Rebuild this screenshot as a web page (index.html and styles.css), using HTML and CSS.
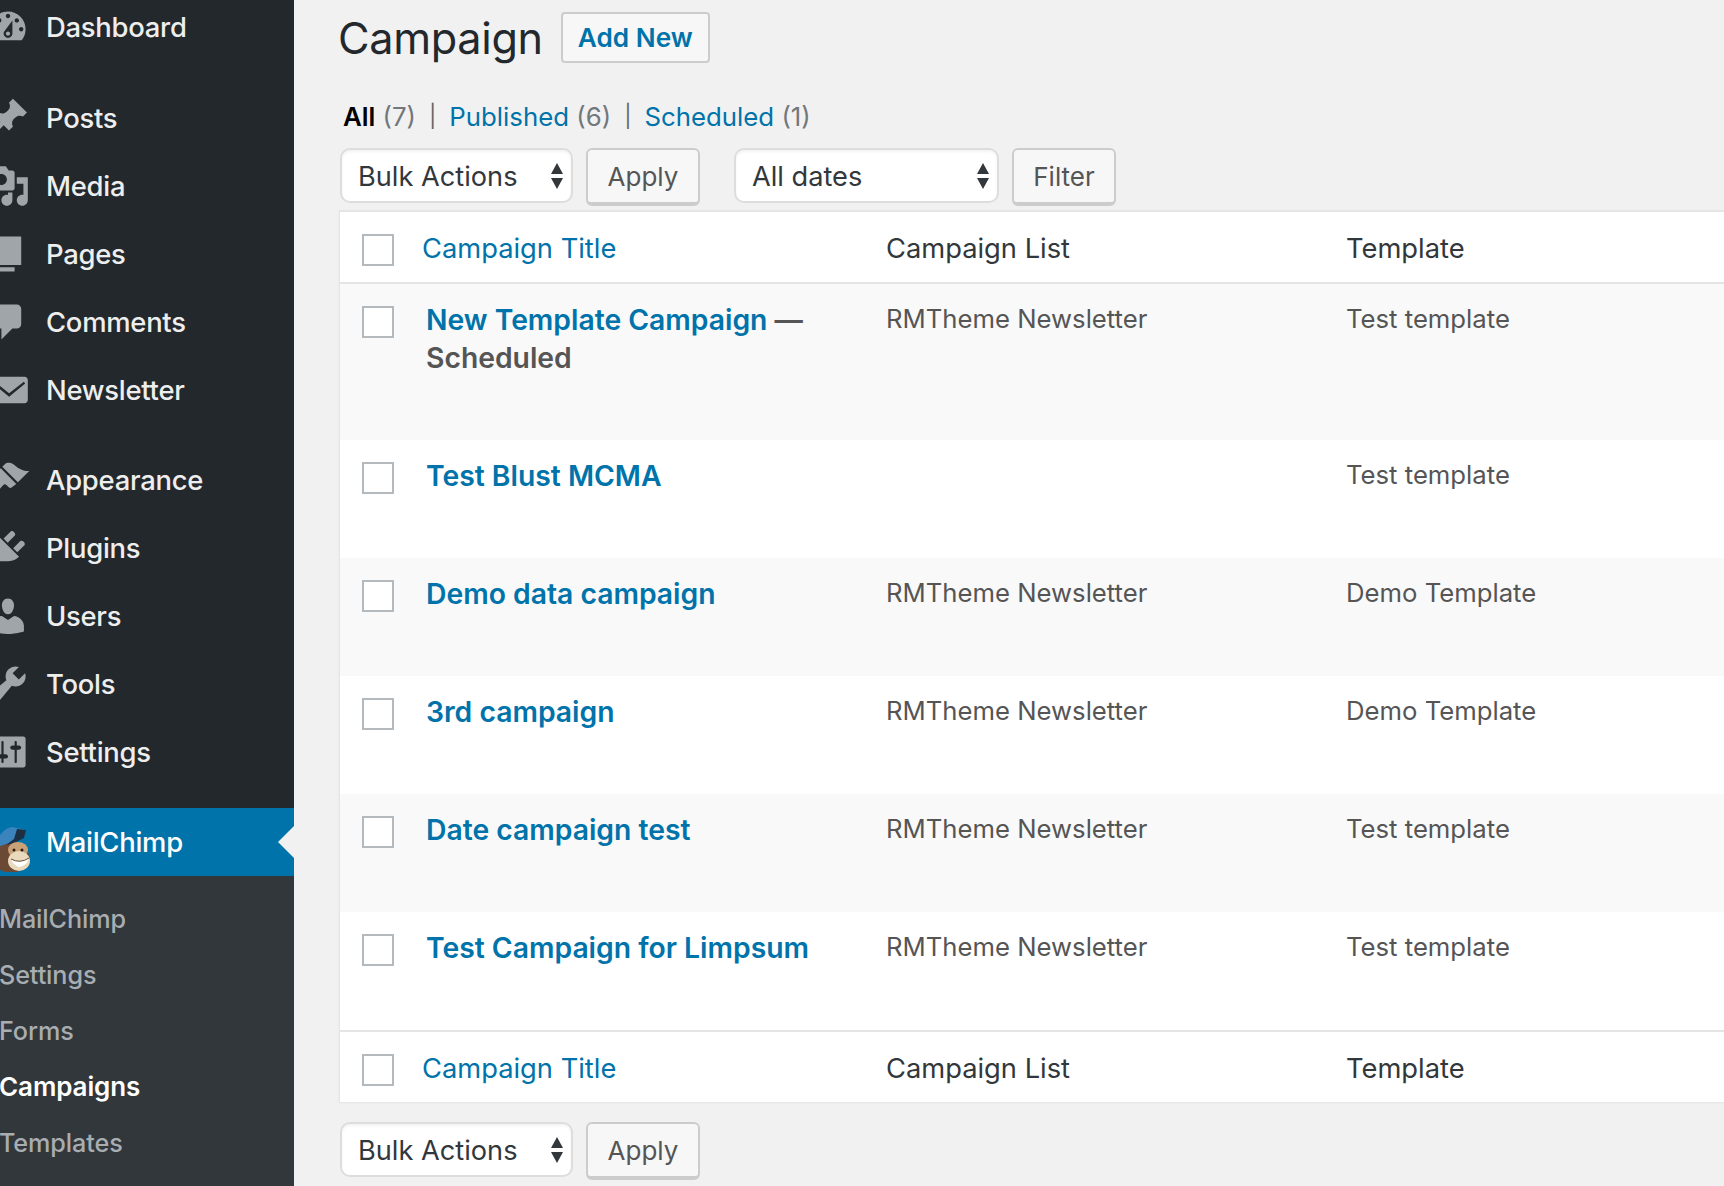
FILE: index.html
```html
<!DOCTYPE html>
<html lang="en">
<head>
<meta charset="utf-8">
<title>Campaign</title>
<link rel="stylesheet" href="styles.css">
</head>
<body>
<div class="page">
  <nav class="sidebar">
    <ul class="menu">
      <li class="item"><svg class="icon" viewBox="0 0 20 20"><path fill-rule="evenodd" d="M3.76 16h12.48c1.1-1.37 1.76-3.11 1.76-5 0-4.42-3.58-8-8-8s-8 3.58-8 8c0 1.89.66 3.63 1.76 5zM10 4c.55 0 1 .45 1 1s-.45 1-1 1-1-.45-1-1 .45-1 1-1zM6 6c.55 0 1 .45 1 1s-.45 1-1 1-1-.45-1-1 .45-1 1-1zm8 0c.55 0 1 .45 1 1s-.45 1-1 1-1-.45-1-1 .45-1 1-1zm-5.37 5.55L12 7v6c0 1.1-.9 2-2 2s-2-.9-2-2c0-.57.24-1.08.63-1.45zM4 10c.55 0 1 .45 1 1s-.45 1-1 1-1-.45-1-1 .45-1 1-1zm12 0c.55 0 1 .45 1 1s-.45 1-1 1-1-.45-1-1 .45-1 1-1zm-5 3c0-.55-.45-1-1-1s-1 .45-1 1 .45 1 1 1 1-.45 1-1z"/></svg><span>Dashboard</span></li>
    </ul>
    <ul class="menu">
      <li class="item"><svg class="icon" viewBox="0 0 20 20"><path d="M10.44 3.02l1.82-1.82 6.36 6.35-1.83 1.82c-1.05-.68-2.48-.57-3.41.36l-.75.75c-.92.93-1.04 2.35-.35 3.41l-1.83 1.82-2.41-2.41-2.8 2.79c-.42.42-3.38 2.71-3.8 2.29s1.86-3.39 2.28-3.81l2.79-2.79L4.1 9.36l1.83-1.82c1.05.69 2.48.57 3.4-.36l.75-.75c.93-.92 1.05-2.35.36-3.41z"/></svg><span>Posts</span></li>
      <li class="item"><svg class="icon" viewBox="0 0 20 20"><path fill-rule="evenodd" d="M13 11V4c0-.55-.45-1-1-1h-1.67L9 1H5L3.67 3H2c-.55 0-1 .45-1 1v7c0 .55.45 1 1 1h10c.55 0 1-.45 1-1zM7 4.500c1.380 0 2.500 1.120 2.500 2.500S8.380 9.500 7 9.500 4.500 8.380 4.500 7 5.620 4.500 7 4.500zM14 6h5v10.500c0 1.380-1.120 2.500-2.500 2.500S14 17.880 14 16.500s1.120-2.500 2.500-2.500c.17 0 .34.02.5.05V9h-3V6zm-4 8.050V13h2v3.500c0 1.380-1.120 2.500-2.500 2.500S7 17.880 7 16.500 8.120 14 9.500 14c.17 0 .34.02.5.05z"/></svg><span>Media</span></li>
      <li class="item"><svg class="icon" viewBox="0 0 20 20"><path d="M6 15V2h10v13H6zm-1 1h8v2H3V5h2v11z"/></svg><span>Pages</span></li>
      <li class="item"><svg class="icon" viewBox="0 0 20 20"><path d="M5 2h9c1.100 0 2 .9 2 2v7c0 1.100-.9 2-2 2h-2l-5 5v-5H5c-1.100 0-2-.9-2-2V4c0-1.100.9-2 2-2z"/></svg><span>Comments</span></li>
      <li class="item"><svg class="icon" viewBox="0 0 20 20"><path fill-rule="evenodd" d="M19 14.500v-9c0-.83-.67-1.500-1.500-1.500H3.490c-.83 0-1.500.67-1.500 1.500v9c0 .83.67 1.500 1.500 1.500H17.500c.83 0 1.500-.67 1.500-1.500zM3.800 6.200l6.700 5.300 6.700-5.300.6.9-7.300 6-7.300-6z"/></svg><span>Newsletter</span></li>
    </ul>
    <ul class="menu">
      <li class="item"><svg class="icon" viewBox="0 0 20 20"><path d="M14.480 11.060L7.410 3.990l1.500-1.500c.5-.56 2.300-.47 3.510.32 1.210.8 1.430 1.280 2.910 2.100 1.180.64 2.450 1.260 4.450.85zm-.71.71L6.700 4.700 4.930 6.470c-.39.39-.39 1.020 0 1.410l1.060 1.060c.39.39.39 1.030 0 1.420-.6.6-1.400 1.220-2.170 1.960-.33.29-.65.57-.94.86-.21.21-.32.490-.32.77 0 .29.11.57.32.78l.63.63c.2.21.48.32.77.32.28 0 .56-.11.77-.32.28-.29.57-.61.86-.94.74-.77 1.360-1.570 1.960-2.170.39-.39 1.030-.39 1.420 0l1.060 1.060c.39.39 1.020.39 1.410 0z"/></svg><span>Appearance</span></li>
      <li class="item"><svg class="icon" viewBox="0 0 20 20"><path d="M13.110 4.360L9.870 7.600 8 5.730l3.240-3.240c.35-.34 1.050-.2 1.560.32.52.51.66 1.210.31 1.550zm-8 1.770l.91-1.120 9.010 9.010-1.190.84c-.71.71-2.630 1.160-3.820 1.160H6.140L4.900 17.260c-.59.59-1.540.59-2.120 0-.59-.58-.59-1.530 0-2.120l1.240-1.240v-3.880c0-1.130.4-3.190 1.090-3.890zm7.260 3.970l3.240-3.240c.34-.35 1.040-.21 1.550.31.52.51.66 1.210.31 1.550l-3.240 3.250z"/></svg><span>Plugins</span></li>
      <li class="item"><svg class="icon" viewBox="0 0 20 20"><path d="M10 9.250c-2.270 0-2.730-3.440-2.730-3.440C7 4.020 7.820 2 9.970 2c2.160 0 2.980 2.020 2.710 3.810 0 0-.41 3.440-2.680 3.440zm0 2.570L12.720 10c2.390 0 4.520 2.330 4.520 4.530v2.490s-3.650 1.130-7.240 1.130c-3.650 0-7.240-1.130-7.240-1.130v-2.490c0-2.250 1.940-4.480 4.470-4.480z"/></svg><span>Users</span></li>
      <li class="item"><svg class="icon" viewBox="0 0 20 20"><path fill-rule="evenodd" d="M16.680 9.770c-1.340 1.340-3.300 1.670-4.950.99l-5.410 6.520c-.99.99-2.590.99-3.580 0s-.99-2.590 0-3.570l6.520-5.420c-.68-1.650-.35-3.610.99-4.950 1.280-1.280 3.120-1.620 4.720-1.060l-2.890 2.890 2.820 2.820 2.860-2.870c.53 1.580.18 3.390-1.080 4.650zM3.810 16.210c.4.39 1.040.39 1.430 0 .4-.4.4-1.040 0-1.430-.39-.4-1.030-.4-1.430 0-.39.39-.39 1.030 0 1.430z"/></svg><span>Tools</span></li>
      <li class="item"><svg class="icon" viewBox="0 0 20 20"><path fill-rule="evenodd" d="M18 16V4c0-.55-.45-1-1-1H3c-.55 0-1 .45-1 1v12c0 .55.45 1 1 1h14c.55 0 1-.45 1-1zM8 11h1c.55 0 1 .45 1 1s-.45 1-1 1H8v1.500c0 .28-.22.5-.5.5s-.5-.22-.5-.5V13H6c-.55 0-1-.45-1-1s.45-1 1-1h1V5.500c0-.28.22-.5.5-.5s.5.22.5.5V11zm5-2h-1c-.55 0-1-.45-1-1s.45-1 1-1h1V5.500c0-.28.22-.5.5-.5s.5.22.5.5V7h1c.55 0 1 .45 1 1s-.45 1-1 1h-1v5.500c0 .28-.22.5-.5.5s-.5-.22-.5-.5V9z"/></svg><span>Settings</span></li>
    </ul>
    <div class="item item-active">
      <svg class="chimp" viewBox="0 0 44 60">
        <ellipse cx="25" cy="45" rx="18" ry="16" fill="#6b4a35"/>
        <path fill="#3b83bd" d="M14 23 C18 18 22 15 27 15 L39 18 L38 25 L27 30 L14 34 Z"/>
        <path fill="#1d2f42" d="M31 17 L40 18 L38 26 L28 31 L20 33 L28 27 Z"/>
        <ellipse cx="32" cy="38" rx="10" ry="8" fill="#c9a177"/>
        <ellipse cx="33" cy="49" rx="11" ry="10" fill="#e9d9bd"/>
        <path fill="#fff" d="M25 47 Q34 52 43 46 Q41 54 33 55 Q27 53 25 47 Z"/>
        <path fill="none" stroke="#6b4a35" stroke-width="1" d="M25 47 Q34 52 43 46"/>
        <circle cx="28" cy="38" r="1.500" fill="#2a1c12"/>
        <circle cx="36" cy="38" r="1.500" fill="#2a1c12"/>
      </svg>
      <span>MailChimp</span>
    </div>
    <ul class="submenu">
      <li class="subitem">MailChimp</li>
      <li class="subitem">Settings</li>
      <li class="subitem">Forms</li>
      <li class="subitem subitem-current">Campaigns</li>
      <li class="subitem">Templates</li>
    </ul>
  </nav>

  <main class="main">
    <div class="title-row">
      <h1 class="title">Campaign</h1>
      <a class="add-new">Add New</a>
    </div>
    <ul class="subsub">
      <li><b class="current">All</b> <span class="count">(7)</span></li>
      <li class="sep">|</li>
      <li><a class="link">Published</a> <span class="count">(6)</span></li>
      <li class="sep">|</li>
      <li><a class="link">Scheduled</a> <span class="count">(1)</span></li>
    </ul>
    <div class="tablenav">
      <div class="select select-bulk">Bulk Actions</div>
      <button class="btn btn-apply">Apply</button>
      <div class="select select-dates">All dates</div>
      <button class="btn btn-filter">Filter</button>
    </div>
    <div class="table">
      <div class="row-head">
        <span class="check"></span>
        <a class="link">Campaign Title</a>
        <span>Campaign List</span>
        <span>Template</span>
      </div>
      <div class="row alt">
        <span class="check"></span>
        <div class="cell-title"><a class="row-title">New Template Campaign</a> <strong class="state">—</strong><br><strong class="state">Scheduled</strong></div>
        <span class="cell">RMTheme Newsletter</span>
        <span class="cell">Test template</span>
      </div>
      <div class="row">
        <span class="check"></span>
        <div class="cell-title"><a class="row-title">Test Blust MCMA</a></div>
        <span class="cell"></span>
        <span class="cell">Test template</span>
      </div>
      <div class="row alt">
        <span class="check"></span>
        <div class="cell-title"><a class="row-title">Demo data campaign</a></div>
        <span class="cell">RMTheme Newsletter</span>
        <span class="cell">Demo Template</span>
      </div>
      <div class="row">
        <span class="check"></span>
        <div class="cell-title"><a class="row-title">3rd campaign</a></div>
        <span class="cell">RMTheme Newsletter</span>
        <span class="cell">Demo Template</span>
      </div>
      <div class="row alt">
        <span class="check"></span>
        <div class="cell-title"><a class="row-title">Date campaign test</a></div>
        <span class="cell">RMTheme Newsletter</span>
        <span class="cell">Test template</span>
      </div>
      <div class="row">
        <span class="check"></span>
        <div class="cell-title"><a class="row-title">Test Campaign for Limpsum</a></div>
        <span class="cell">RMTheme Newsletter</span>
        <span class="cell">Test template</span>
      </div>
      <div class="row-head row-foot">
        <span class="check"></span>
        <a class="link">Campaign Title</a>
        <span>Campaign List</span>
        <span>Template</span>
      </div>
    </div>
    <div class="tablenav tablenav-bottom">
      <div class="select select-bulk">Bulk Actions</div>
      <button class="btn btn-apply">Apply</button>
    </div>
  </main>
</div>
</body>
</html>
```

FILE: styles.css
```css
* { box-sizing: border-box; }
html, body { margin: 0; padding: 0; height: 100%; }
body {
  font-family: Inter, "Liberation Sans", sans-serif;
  background: #f1f1f1;
  color: #32373c;
  overflow: hidden;
}
ul { list-style: none; margin: 0; padding: 0; }
.page { display: flex; height: 1186px; overflow: hidden; }

/* Sidebar */
.sidebar {
  flex: 0 0 294px;
  background: #23282d;
  overflow: hidden;
}
.menu { margin-bottom: 22px; }
.menu:first-child { margin-top: -7px; margin-bottom: 23px; }
.item {
  display: flex;
  align-items: center;
  height: 68px;
  font-size: 27.4px;
  font-weight: 500;
  letter-spacing: -.25px;
  color: #eee;
}
.icon {
  flex: none;
  width: 44px;
  height: 44px;
  margin-left: -14px;
  margin-right: 16px;
  fill: #a0a5aa;
}
.item-active {
  position: relative;
  background: #0073aa;
  color: #fff;
}
.item-active::after {
  content: "";
  position: absolute;
  right: 0;
  top: 50%;
  margin-top: -16px;
  border: 16px solid transparent;
  border-left-width: 0;
  border-right-color: #f1f1f1;
}
.chimp {
  flex: none;
  width: 44px;
  height: 60px;
  margin-left: -14px;
  margin-right: 16px;
}
.submenu {
  background: #32373c;
  padding: 15px 0 20px;
}
.subitem {
  height: 56px;
  line-height: 56px;
  margin-left: -1px;
  font-size: 25.2px;
  font-weight: 500;
  letter-spacing: -.1px;
  color: #a8adb2;
  white-space: nowrap;
}
.subitem-current { color: #fff; font-weight: 600; font-size: 26px; }

/* Main */
.main { flex: 1; min-width: 0; padding: 12px 0 0 45px; }
.title-row { display: flex; align-items: center; height: 51px; margin-left: -1px; }
.title {
  margin: 0 18px 0 0;
  font-size: 43.2px;
  font-weight: 400;
  letter-spacing: -.3px;
  color: #23282d;
}
.add-new {
  display: flex;
  align-items: center;
  justify-content: center;
  width: 149px;
  height: 51px;
  border: 2px solid #ccc;
  border-radius: 4px;
  background: #f7f7f7;
  color: #0073aa;
  font-size: 26.2px;
  font-weight: 600;
}
.subsub {
  display: flex;
  align-items: center;
  gap: 13px;
  height: 36px;
  margin: 35px 0 0 4px;
  font-size: 25.8px;
  color: #555;
}
.current { color: #000; font-weight: 600; }
.count { color: #72777c; }
.sep { color: #666; font-size: 22px; }
.link { color: #0073aa; }

.tablenav { display: flex; align-items: flex-start; height: 58px; margin-top: 14px; }
.tablenav-bottom { margin-top: 20px; }
.select {
  position: relative;
  height: 55px;
  padding-left: 16px;
  line-height: 53px;
  border: 2px solid #ddd;
  border-radius: 10px;
  background: #fff;
  font-size: 27.2px;
  color: #32373c;
  box-shadow: inset 0 2px 3px rgba(0,0,0,.05);
}
.select::before, .select::after {
  content: "";
  position: absolute;
  right: 8px;
  border-left: 6.5px solid transparent;
  border-right: 6.5px solid transparent;
}
.select::before { top: 13px; border-bottom: 11px solid #32373c; }
.select::after { top: 28px; border-top: 11px solid #32373c; }
.select-bulk { width: 233px; margin-left: 1px; }
.select-dates { width: 265px; margin-left: 34px; }
.btn {
  height: 58px;
  margin-left: 13px;
  padding: 0;
  border: 2px solid #ccc;
  border-bottom-width: 4px;
  border-radius: 6px;
  background: #f7f7f7;
  color: #555;
  font: 400 26px Inter, "Liberation Sans", sans-serif;
}
.btn-apply { width: 114px; }
.btn-filter { width: 104px; }

/* Table */
.table {
  margin-top: 4px;
  border-top: 2px solid #e5e5e5;
  border-left: 1px solid #e5e5e5;
  background: #fff;
  box-shadow: 0 1px 2px rgba(0,0,0,.06);
}
.row-head, .row {
  display: grid;
  align-items: start;
  padding-left: 22px;
}
.row-head {
  grid-template-columns: 60px 464px 460px 1fr;
  align-items: center;
  height: 72px;
  padding-top: 2px;
  border-bottom: 2px solid #e5e5e5;
  font-size: 27.3px;
  color: #32373c;
}
.row-head .check { margin-top: 4px; }
.row-foot { border-bottom: 0; border-top: 2px solid #e5e5e5; }
.row {
  grid-template-columns: 64px 460px 460px 1fr;
  padding-top: 17px;
  padding-bottom: 63px;
}
.alt { background: #f9f9f9; }
.check {
  display: block;
  width: 32px;
  height: 32px;
  border: 2px solid #b4b9be;
  background: #fff;
}
.row .check { margin-top: 5px; }
.cell-title { font-size: 28.3px; line-height: 38px; font-weight: 600; width: 396px; }
.row-title { color: #0073aa; }
.state { color: #555; font-weight: 600; }
.cell { font-size: 25.7px; line-height: 36px; color: #555; }
```
